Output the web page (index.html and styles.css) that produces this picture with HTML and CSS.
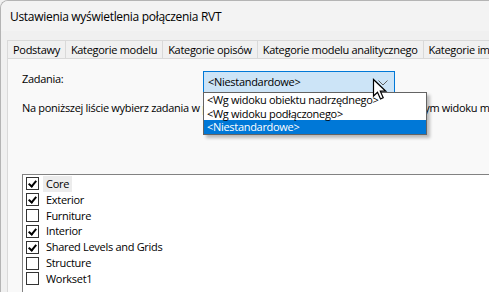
FILE: index.html
```html
<!DOCTYPE html>
<html lang="pl">
<head>
<meta charset="utf-8">
<link rel="stylesheet" href="styles.css">
</head>
<body>
<div class="window">
  <div class="titlebar">Ustawienia wyświetlenia połączenia RVT</div>
  <div class="client">
    <div class="tabs">
      <div class="tab">Podstawy</div>
      <div class="tab">Kategorie modelu</div>
      <div class="tab">Kategorie opisów</div>
      <div class="tab">Kategorie modelu analitycznego</div>
      <div class="tab">Kategorie importowane</div>
    </div>
    <div class="panel">
      <div class="row">
        <span class="label">Zadania:</span>
        <div class="combo">
          <span>&lt;Niestandardowe&gt;</span>
          <svg class="chev" width="10" height="6" viewBox="0 0 10 6"><path d="M0.5 0.5 L5 5 L9.5 0.5" fill="none" stroke="#606060" stroke-width="1"/></svg>
        </div>
      </div>
      <p class="desc">Na poniższej liście wybierz zadania w połączonym modelu do wyświetlenia w bieżącym widoku modelu.</p>
      <div class="list">
        <div class="item"><span class="cb on"></span><span class="txt focus">Core</span></div>
        <div class="item"><span class="cb on"></span><span class="txt">Exterior</span></div>
        <div class="item"><span class="cb"></span><span class="txt">Furniture</span></div>
        <div class="item"><span class="cb on"></span><span class="txt">Interior</span></div>
        <div class="item"><span class="cb on"></span><span class="txt">Shared Levels and Grids</span></div>
        <div class="item"><span class="cb"></span><span class="txt">Structure</span></div>
        <div class="item"><span class="cb"></span><span class="txt">Workset1</span></div>
      </div>
    </div>
  </div>
  <div class="dropdown">
    <div class="opt">&lt;Wg widoku obiektu nadrzędnego&gt;</div>
    <div class="opt">&lt;Wg widoku podłączonego&gt;</div>
    <div class="opt sel">&lt;Niestandardowe&gt;</div>
  </div>
  <svg class="cursor" width="18" height="24" viewBox="0 0 18 24">
    <path d="M1.5 1.5 L1.5 18 L5.5 14.2 L8.5 21 L11.2 19.8 L8.3 13.2 L13.8 13.2 Z" fill="#fff" stroke="#000" stroke-width="1.2" stroke-linejoin="miter"/>
  </svg>
</div>
</body>
</html>
```
FILE: styles.css
```css
* { box-sizing: border-box; }
html, body { margin: 0; padding: 0; height: 100%; overflow: hidden; }
body {
  font-family: "Segoe UI", "Open Sans", "Noto Sans", sans-serif;
  font-size: 11px;
  letter-spacing: -0.3px;
  color: #000;
  background: #f0f0f0;
}
.window {
  position: relative;
  height: 100%;
  border-left: 1px solid #b4b4b4;
  border-top: 1px solid #b4b4b4;
  border-top-left-radius: 8px;
  background: #f0f0f0;
  overflow: hidden;
}
.titlebar {
  height: 30px;
  padding: 8px 0 0 9px;
  font-size: 12px;
  line-height: 16px;
  background: #f3f3f3;
  white-space: nowrap;
}
.client {
  padding: 9px 0 0 6px;
}
.tabs {
  display: flex;
  height: 18px;
  white-space: nowrap;
}
.tab {
  flex: none;
  border: 1px solid #d9d9d9;
  border-bottom: none;
  border-left: none;
  padding: 0 5px;
  line-height: 17px;
  background: #f0f0f0;
}
.tab:first-child { border-left: 1px solid #d9d9d9; }
.panel {
  border: 1px solid #d9d9d9;
  border-right: none;
  background: #f9f9f9;
  height: 240px;
  padding: 12px 0 0 14px;
}
.row {
  display: flex;
  align-items: flex-start;
  height: 22px;
}
.label { width: 181px; line-height: 16px; }
.combo {
  display: flex;
  align-items: center;
  justify-content: space-between;
  width: 192px;
  height: 22px;
  border: 1px solid #0078d7;
  background: #cce4f7;
  padding: 0 6px 0 4px;
  line-height: 16px;
}
.chev { margin-top: 1px; }
.desc {
  margin: 7px 0 0 0;
  white-space: nowrap;
  line-height: 16px;
  height: 16px;
}
.list {
  margin-top: 58px;
  border: 1px solid #828282;
  border-right: none;
  background: #fff;
  padding: 1px 0 0 3px;
  height: 140px;
}
.item {
  display: flex;
  align-items: center;
  height: 15.83px;
}
.cb {
  width: 13px;
  height: 13px;
  border: 1px solid #333;
  background: #fff;
  position: relative;
  flex: none;
}
.cb.on::after {
  content: "";
  position: absolute;
  left: 3px;
  top: 1px;
  width: 3px;
  height: 6px;
  border-right: 2px solid #000;
  border-bottom: 2px solid #000;
  transform: rotate(40deg);
}
.txt {
  margin-left: 4px;
  padding: 0 3px;
  line-height: 16px;
}
.txt.focus { background: #ececec; }
.dropdown {
  position: absolute;
  left: 202px;
  top: 91px;
  width: 224px;
  border: 1px solid #646464;
  background: #fff;
  box-shadow: 3px 3px 3px rgba(0,0,0,0.25);
  padding: 0;
}
.opt {
  height: 13.5px;
  line-height: 13px;
  padding-left: 3px;
  white-space: nowrap;
}
.opt.sel { background: #0078d7; color: #fff; }
.cursor {
  position: absolute;
  left: 371px;
  top: 77px;
}
```
